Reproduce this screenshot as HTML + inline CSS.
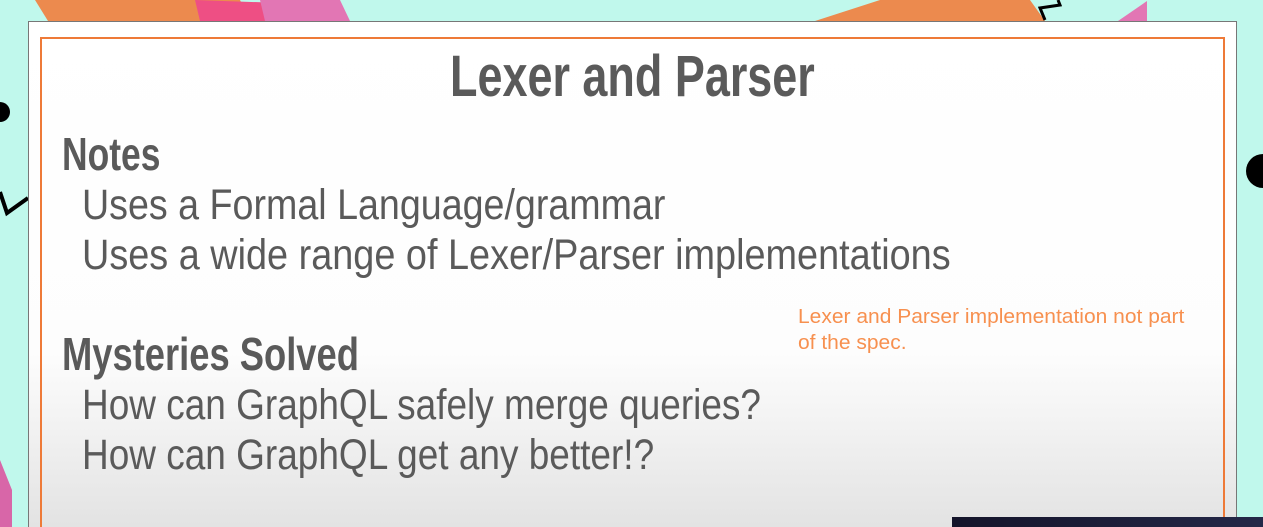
<!DOCTYPE html>
<html><head><meta charset="utf-8"><style>
*{margin:0;padding:0}
html,body{width:1263px;height:527px;overflow:hidden}
body{background:#c0f8ec;position:relative;font-family:"Liberation Sans",sans-serif}
.t{position:absolute;white-space:nowrap;line-height:1;transform-origin:0 0;color:#5a5a5a}
</style></head><body>
<svg width="1263" height="527" style="position:absolute;left:0;top:0">
<polygon points="35,0 240,0 250,21 48,21" fill="#ec8a4e"/>
<polygon points="195,0 310,4 265,21 200,21" fill="#ee4f84"/>
<polygon points="260,0 340,0 350,21 265,21" fill="#e276b4"/>
<polygon points="815,21 880,0 1030,0 1045,21" fill="#ec8a4e"/>
<polygon points="1118,21 1147,1 1147,21" fill="#e276b4"/>
<polyline points="1045,20 1040,8 1060,5 1058,0" fill="none" stroke="#000" stroke-width="3"/>
<circle cx="0" cy="112" r="10" fill="#000"/>
<circle cx="1263" cy="171" r="17" fill="#000"/>
<polyline points="0,192 7,213 28,198" fill="none" stroke="#000" stroke-width="4"/>
<polygon points="0,460 12,490 12,527 0,527" fill="#d866a8"/>
</svg>
<div style="position:absolute;left:28px;top:21px;width:1207px;height:510px;border:1px solid #777;background:linear-gradient(#fff 0%,#fdfdfd 65%,#e2e2e2 100%)"></div>
<div style="position:absolute;left:40px;top:37px;width:1181px;height:494px;border:2px solid #ee7a38"></div>
<div class="t" style="left:450px;top:48px;font-size:58px;font-weight:bold;transform:scaleX(0.775)">Lexer and Parser</div>
<div class="t" style="left:62px;top:131px;font-size:46px;font-weight:bold;transform:scaleX(0.77)">Notes</div>
<div class="t" style="left:82px;top:184px;font-size:43px;transform:scaleX(0.875)">Uses a Formal Language/grammar</div>
<div class="t" style="left:82px;top:234px;font-size:43px;transform:scaleX(0.88)">Uses a wide range of Lexer/Parser implementations</div>
<div class="t" style="left:62px;top:331px;font-size:46px;font-weight:bold;transform:scaleX(0.79)">Mysteries Solved</div>
<div class="t" style="left:82px;top:384px;font-size:43px;transform:scaleX(0.86)">How can GraphQL safely merge queries?</div>
<div class="t" style="left:82px;top:434px;font-size:43px;transform:scaleX(0.86)">How can GraphQL get any better!?</div>
<div class="t" style="left:798px;top:304px;font-size:20px;line-height:26px;color:#f7904f;transform:scaleX(1.05)">Lexer and Parser implementation not part<br>of the spec.</div>
<div style="position:absolute;left:952px;top:517px;width:311px;height:10px;background:linear-gradient(90deg,#14142a,#242848)"></div>
</body></html>
